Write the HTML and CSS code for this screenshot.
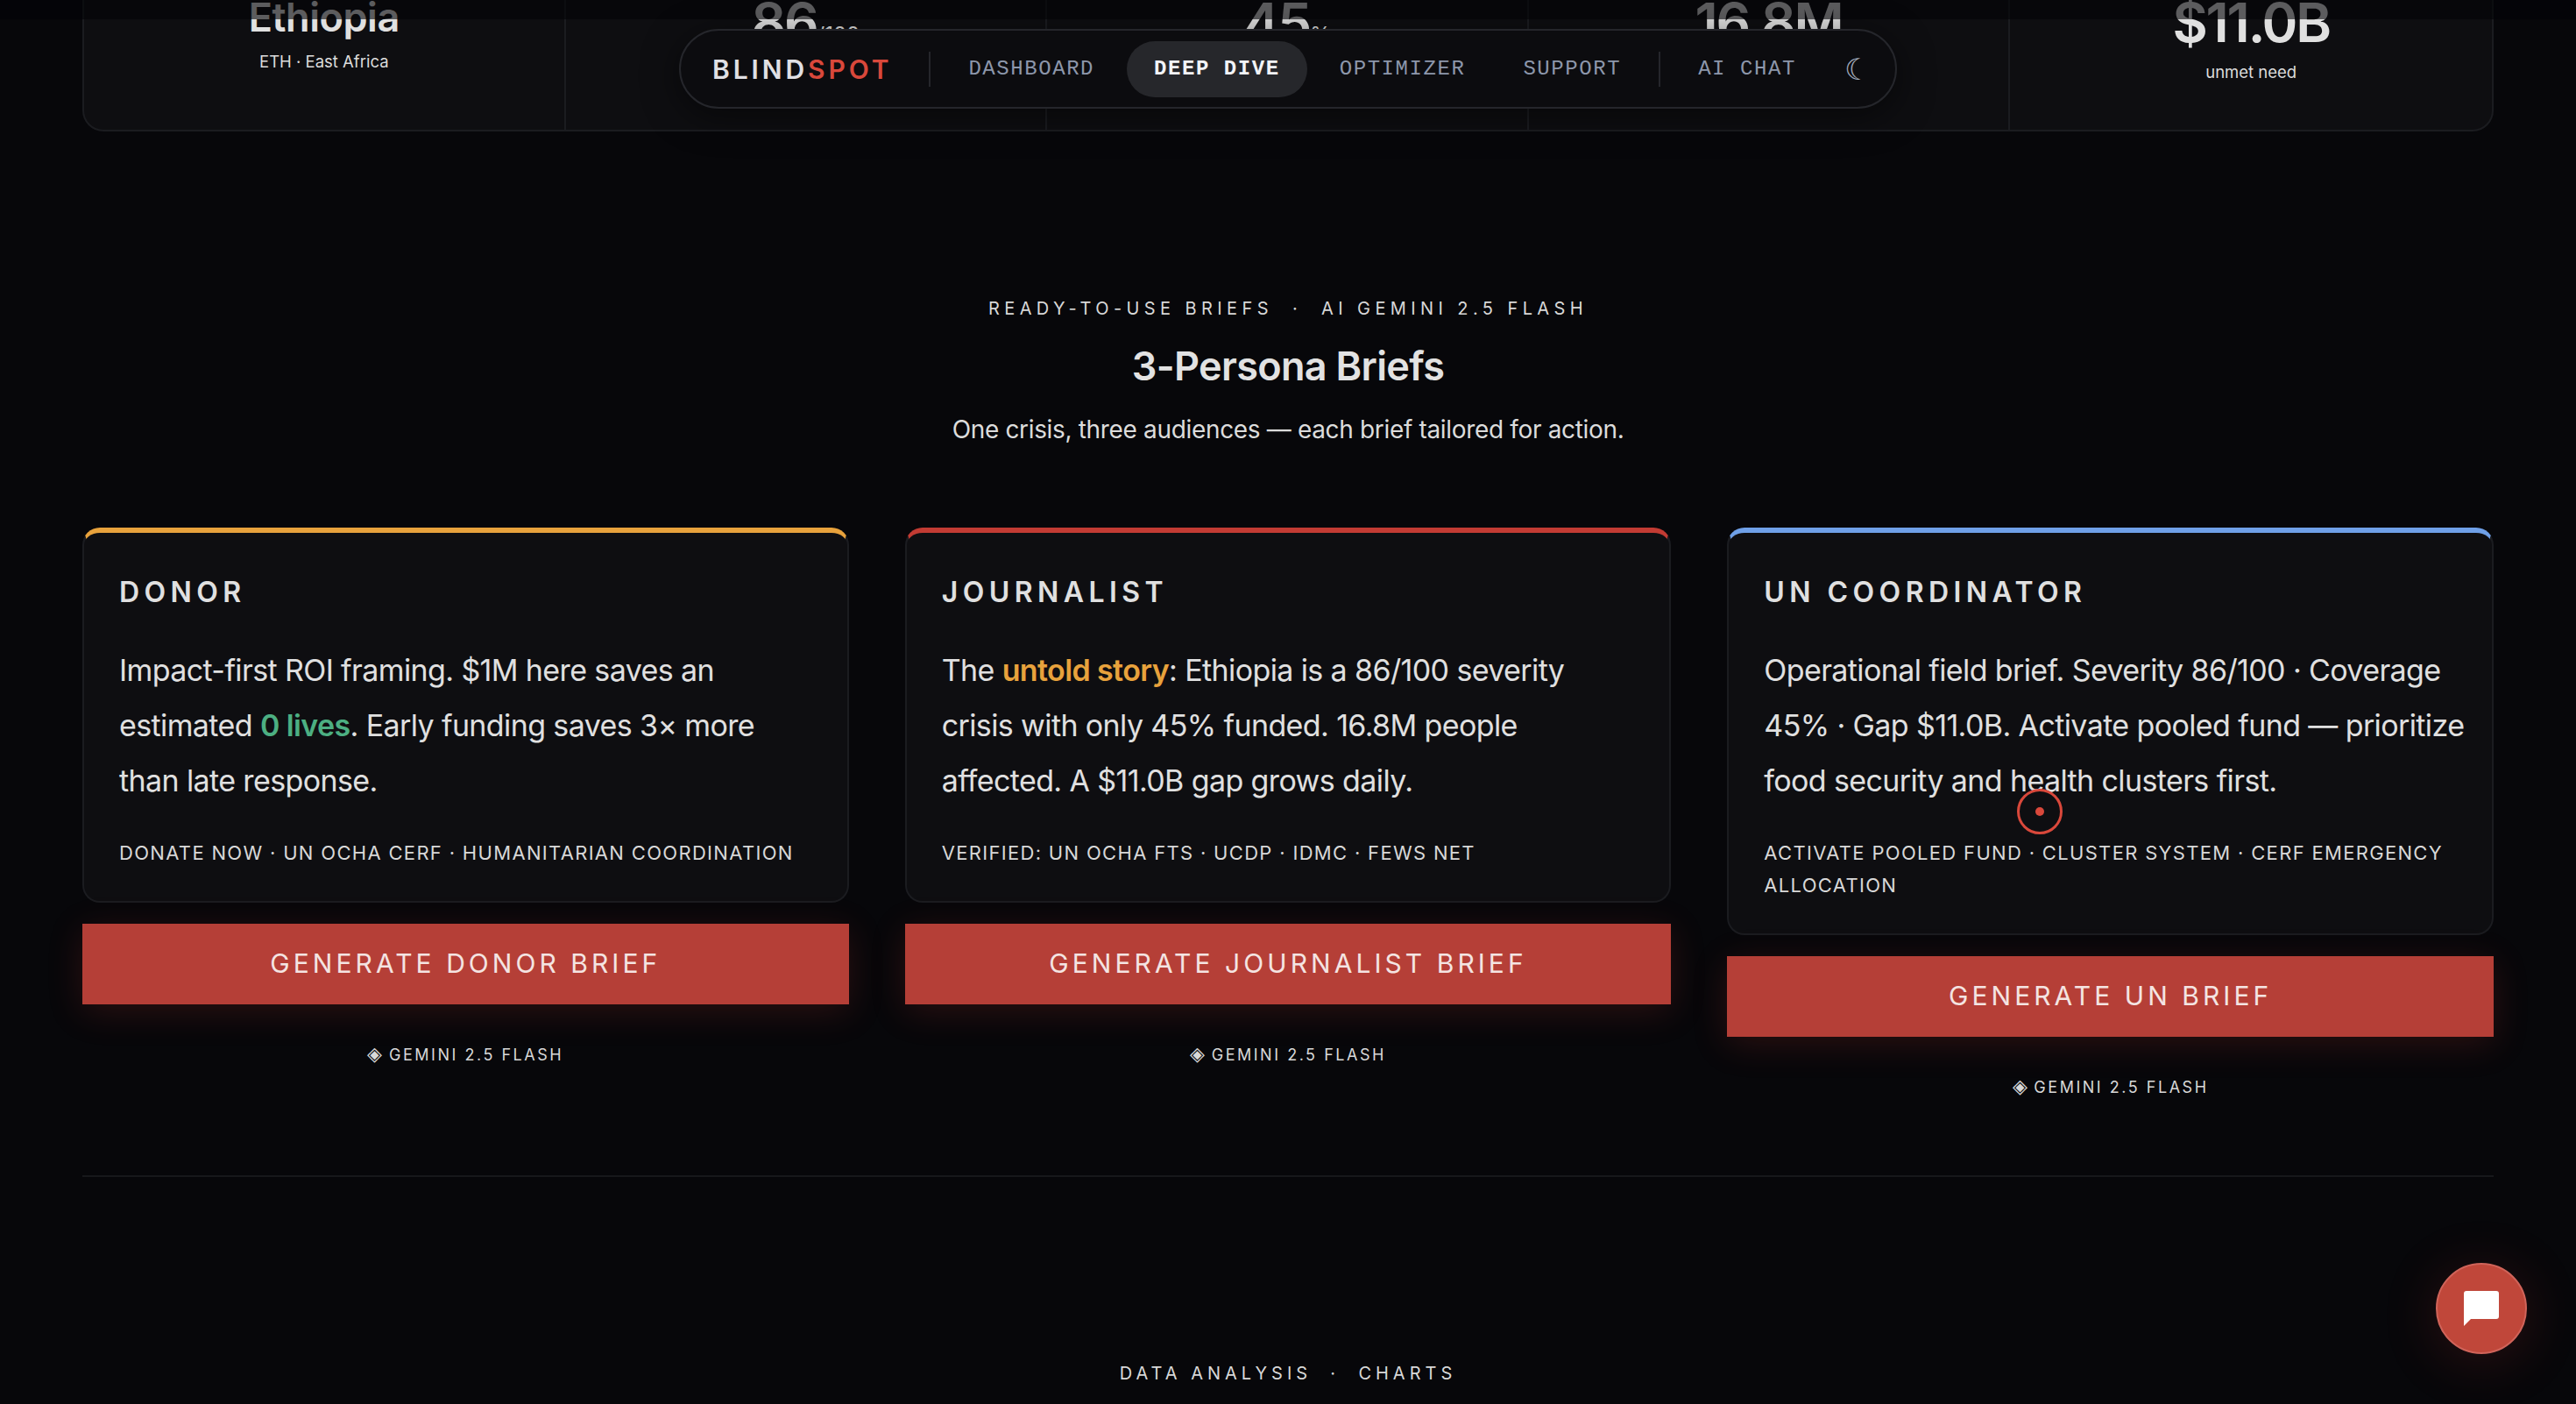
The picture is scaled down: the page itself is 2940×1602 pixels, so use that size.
FILE: index.html
```html
<!DOCTYPE html>
<html lang="en">
<head>
    <meta charset="UTF-8">
    <title>Blindspot - Deep Dive</title>
    <link rel="stylesheet" href="styles.css">
</head>
<body>

    <div class="top-fade"></div>

    <nav class="navbar">
        <span class="logo">BLIND<span class="logo-red">SPOT</span></span>
        <span class="nav-sep"></span>
        <a class="nav-link">DASHBOARD</a>
        <a class="nav-link active">DEEP DIVE</a>
        <a class="nav-link">OPTIMIZER</a>
        <a class="nav-link">SUPPORT</a>
        <span class="nav-sep"></span>
        <a class="nav-link">AI CHAT</a>
        <span class="moon">☾</span>
    </nav>

    <main class="page">
        <div class="stats">
            <div class="stat">
                <div class="stat-name">Ethiopia</div>
                <div class="stat-sub">ETH · East Africa</div>
            </div>
            <div class="stat">
                <div class="stat-value">86<small>/100</small></div>
                <div class="stat-sub">severity</div>
            </div>
            <div class="stat">
                <div class="stat-value">45<small>%</small></div>
                <div class="stat-sub">funded</div>
            </div>
            <div class="stat">
                <div class="stat-value">16.8M</div>
                <div class="stat-sub">in need</div>
            </div>
            <div class="stat">
                <div class="stat-value">$11.0B</div>
                <div class="stat-sub">unmet need</div>
            </div>
        </div>

        <header class="section-head">
            <div class="eyebrow">READY-TO-USE BRIEFS &nbsp;·&nbsp; AI GEMINI 2.5 FLASH</div>
            <h2>3-Persona Briefs</h2>
            <p>One crisis, three audiences — each brief tailored for action.</p>
        </header>

        <section class="briefs">
            <div class="brief">
                <div class="card card-donor">
                    <h3>DONOR</h3>
                    <p class="card-text">Impact-first ROI framing. $1M here saves an estimated <strong class="green">0 lives</strong>. Early funding saves 3× more than late response.</p>
                    <p class="card-tags">DONATE NOW · UN OCHA CERF · HUMANITARIAN COORDINATION</p>
                </div>
                <button class="gen-btn">GENERATE DONOR BRIEF</button>
                <div class="model-note"><span class="model-icon">◈</span> GEMINI 2.5 FLASH</div>
            </div>
            <div class="brief">
                <div class="card card-journalist">
                    <h3>JOURNALIST</h3>
                    <p class="card-text">The <strong class="orange">untold story</strong>: Ethiopia is a 86/100 severity crisis with only 45% funded. 16.8M people affected. A $11.0B gap grows daily.</p>
                    <p class="card-tags">VERIFIED: UN OCHA FTS · UCDP · IDMC · FEWS NET</p>
                </div>
                <button class="gen-btn">GENERATE JOURNALIST BRIEF</button>
                <div class="model-note"><span class="model-icon">◈</span> GEMINI 2.5 FLASH</div>
            </div>
            <div class="brief">
                <div class="card card-un">
                    <h3>UN COORDINATOR</h3>
                    <p class="card-text">Operational field brief. Severity 86/100 · Coverage 45% · Gap $11.0B. Activate pooled fund — prioritize food security and health clusters first.</p>
                    <p class="card-tags">ACTIVATE POOLED FUND · CLUSTER SYSTEM · CERF EMERGENCY ALLOCATION</p>
                </div>
                <button class="gen-btn">GENERATE UN BRIEF</button>
                <div class="model-note"><span class="model-icon">◈</span> GEMINI 2.5 FLASH</div>
            </div>
        </section>

        <hr class="divider">

        <div class="eyebrow charts-head">DATA ANALYSIS &nbsp;·&nbsp; CHARTS</div>
    </main>

    <!-- custom cursor -->
    <div class="cursor"><span class="cursor-dot"></span></div>

    <button class="chat-fab" aria-label="Open chat">
        <svg width="40" height="40" viewBox="0 0 40 40"><path fill="#fff" d="M3 0h34a3 3 0 0 1 3 3v26a3 3 0 0 1-3 3H8l-8 8V3a3 3 0 0 1 3-3z"/></svg>
    </button>

</body>
</html>
```

FILE: styles.css
```css
/* Base */
html, body {
    height: 100%;
}
body {
    margin: 0;
    height: 1602px;
    overflow: hidden;
    background-color: #07070a;
    color: #e0e0e0;
    font-family: Inter, "Noto Sans", sans-serif;
    position: relative;
}
.page {
    margin-top: -50px;
    padding: 0 94px;
}

/* Dark strip at the very top of the window */
.top-fade {
    position: absolute;
    top: 0;
    left: 0;
    right: 0;
    height: 22px;
    background-color: rgba(4, 4, 6, 0.6);
    z-index: 5;
}

/* Floating nav */
.navbar {
    position: absolute;
    top: 33px;
    left: 775px;
    width: 1390px;
    height: 91px;
    box-sizing: border-box;
    display: flex;
    align-items: center;
    gap: 4px;
    padding: 0 32px 0 36px;
    background-color: #0c0c0f;
    border: 2px solid #25262b;
    border-radius: 46px;
    box-shadow: 0 8px 40px rgba(0, 0, 0, 0.5);
    z-index: 10;
}
.logo {
    font-size: 30px;
    font-weight: 600;
    letter-spacing: 0.13em;
    color: #e0e0e4;
    margin-right: 30px;
    white-space: nowrap;
}
.logo-red { color: #d9483b; }
.nav-sep {
    width: 2px;
    height: 40px;
    background-color: #25262b;
    flex-shrink: 0;
    margin: 0 8px;
}
.nav-link {
    font-family: "Liberation Mono", monospace;
    font-size: 24px;
    letter-spacing: 0.065em;
    color: #8d97ab;
    padding: 0 31px;
    height: 64px;
    line-height: 64px;
    white-space: nowrap;
}
.nav-link.active {
    background-color: #26272b;
    color: #f2f4f8;
    font-weight: bold;
    border-radius: 32px;
    margin: 0 2px;
}
.moon {
    font-size: 34px;
    color: #a2abbc;
    margin-left: 20px;
}

/* Stats strip */
.stats {
    display: grid;
    grid-template-columns: repeat(5, 1fr);
    height: 200px;
    background-color: #0e0e11;
    border: 2px solid #1b1c20;
    border-radius: 0 0 24px 24px;
    box-sizing: border-box;
}
.stat {
    text-align: center;
    border-right: 2px solid #1b1c20;
}
.stat:last-child { border-right: none; }
.stat-name {
    font-size: 45px;
    font-weight: 600;
    line-height: 52px;
    margin-top: 42px;
    letter-spacing: -0.01em;
}
.stat-value {
    font-size: 62px;
    font-weight: 600;
    line-height: 70px;
    margin-top: 39px;
    letter-spacing: -0.035em;
}
.stat-value small {
    font-size: 24px;
    font-weight: 400;
    letter-spacing: 0;
}
.stat-sub {
    font-size: 18.5px;
    line-height: 28px;
    margin-top: 7px;
    color: #dcdcdc;
}
.stat-name + .stat-sub { margin-top: 10px; }

/* Section heading */
.section-head {
    text-align: center;
    padding-top: 188px;
}
.eyebrow {
    font-size: 20px;
    letter-spacing: 0.27em;
    line-height: 28px;
    color: #d8d8d8;
    text-align: center;
}
.section-head h2 {
    margin: 24px 0 0;
    font-size: 45px;
    font-weight: 600;
    line-height: 56px;
    letter-spacing: -0.015em;
    color: #e2e2e2;
}
.section-head p {
    margin: 24px 0 0;
    font-size: 28px;
    line-height: 40px;
    color: #dcdcdc;
    letter-spacing: -0.012em;
}

/* Brief cards */
.briefs {
    display: grid;
    grid-template-columns: repeat(3, 1fr);
    gap: 64px;
    align-items: start;
    margin-top: 92px;
}
.card {
    background-color: #0e0e11;
    border: 2px solid #1b1c20;
    border-top: 6px solid #e8a23c;
    border-radius: 20px;
    padding: 46px 30px 36px 40px;
}
.card-donor { border-top-color: #e8a23c; }
.card-journalist { border-top-color: #c23b33; }
.card-un { border-top-color: #6fa0e8; }
.card h3 {
    margin: 0;
    font-size: 32px;
    font-weight: 600;
    line-height: 44px;
    letter-spacing: 0.17em;
    color: #e0e0e0;
}
.card-text {
    margin: 35px 0 0;
    font-size: 34px;
    line-height: 63px;
    letter-spacing: -0.018em;
    color: #e0e0e0;
}
.card-text strong { font-weight: 600; }
.green { color: #4caf82; }
.orange { color: #e8a23c; }
.card-tags {
    margin: 33px 0 0;
    font-size: 22px;
    line-height: 37px;
    letter-spacing: 0.06em;
    color: #d8d8d8;
}
.gen-btn {
    display: block;
    width: 100%;
    height: 92px;
    margin-top: 24px;
    padding: 0 0 2px;
    background-color: #b53f37;
    border: none;
    color: #f4e4e2;
    font-family: Inter, "Noto Sans", sans-serif;
    font-size: 30px;
    letter-spacing: 0.135em;
    box-shadow: 0 8px 40px rgba(192, 57, 43, 0.2);
}
.model-note {
    margin-top: 42px;
    font-size: 18px;
    line-height: 28px;
    letter-spacing: 0.14em;
    text-align: center;
    color: #d8d8d8;
}
.model-icon {
    font-size: 22px;
    letter-spacing: 0;
}

.divider {
    margin: 86px 0 0;
    border: none;
    height: 2px;
    background-color: #17181b;
}
.charts-head {
    margin-top: 210px;
    letter-spacing: 0.25em;
}

/* Cursor ring */
.cursor {
    position: absolute;
    left: 2302px;
    top: 900px;
    width: 52px;
    height: 52px;
    box-sizing: border-box;
    border: 3px solid #d9483b;
    border-radius: 50%;
    display: flex;
    align-items: center;
    justify-content: center;
    z-index: 20;
}
.cursor-dot {
    width: 10px;
    height: 10px;
    border-radius: 50%;
    background-color: #d9483b;
}

/* Chat button */
.chat-fab {
    position: absolute;
    left: 2780px;
    top: 1441px;
    width: 104px;
    height: 104px;
    padding: 0;
    border-radius: 50%;
    border: 2px solid #d0645a;
    background-color: #c0473a;
    display: flex;
    align-items: center;
    justify-content: center;
    box-shadow: 0 8px 64px rgba(192, 57, 43, 0.2);
    z-index: 20;
}
```
